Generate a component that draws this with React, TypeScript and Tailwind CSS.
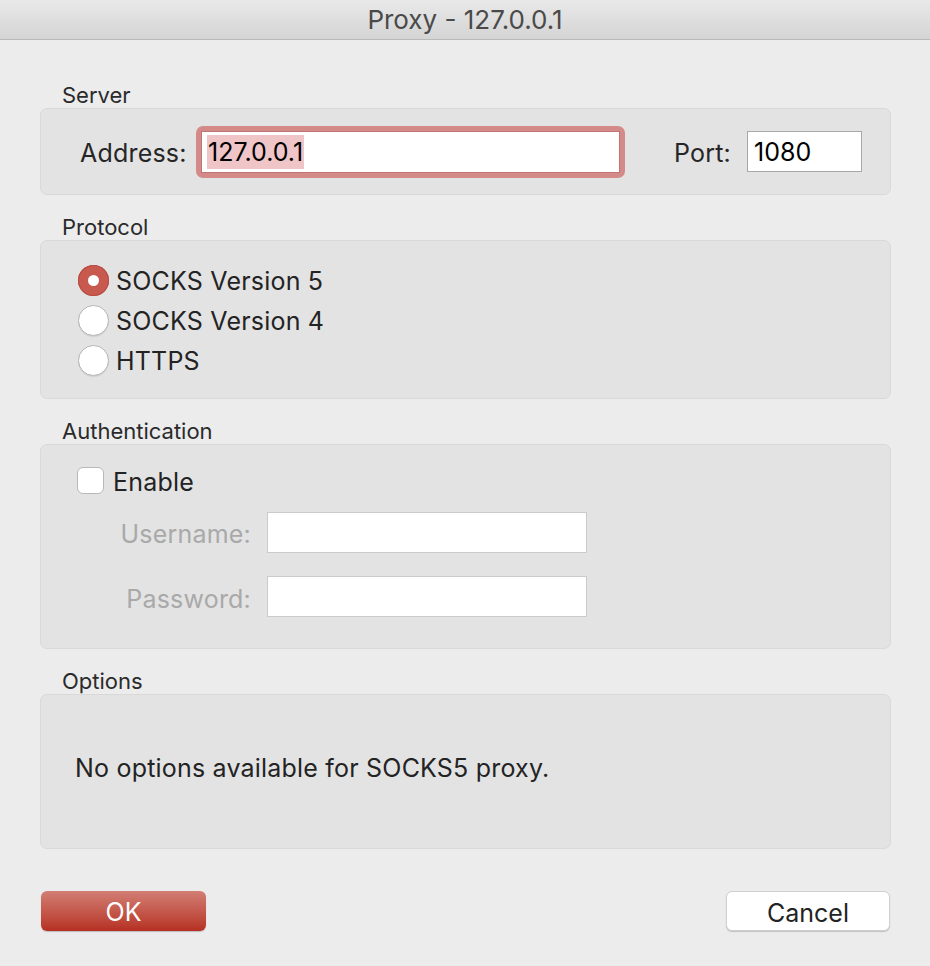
import React from 'react';

const font = { fontFamily: 'Inter, "Liberation Sans", Arial, sans-serif' };

const SectionLabel: React.FC<{ children: React.ReactNode }> = ({ children }) => (
  <div className="h-[26px] pl-[22px] flex items-center text-[22px] leading-none text-[#2a2a2a]">{children}</div>
);

const Radio: React.FC<{ checked?: boolean; label: string }> = ({ checked, label }) => (
  <div className="h-[40px] flex items-center">
    {checked ? (
      <span className="w-[31px] h-[31px] rounded-full bg-[#c8594e] flex items-center justify-center shadow-[inset_0_0_0_1px_#b84a40]">
        <span className="w-[11px] h-[11px] rounded-full bg-white" />
      </span>
    ) : (
      <span className="w-[31px] h-[31px] rounded-full bg-white border border-[#b5b5b5] shadow-[0_1px_1px_rgba(0,0,0,0.08)]" />
    )}
    <span className="ml-[7px] pt-[4px] text-[25px] tracking-[0.2px] text-[#232323]">{label}</span>
  </div>
);

export default function App() {
  return (
    <div className="w-[930px] h-[966px] bg-[#ececec] overflow-hidden" style={font}>
      {/* Title bar */}
      <div className="h-[40px] bg-gradient-to-b from-[#e9e9e9] to-[#d4d4d4] border-b border-[#b9b9b9] flex items-center justify-center">
        <span className="text-[26px] text-[#4a4a4a]">Proxy - 127.0.0.1</span>
      </div>

      <div className="px-[40px] pt-[42px] pr-[39px]">
        {/* Server */}
        <SectionLabel>Server</SectionLabel>
        <div className="h-[87px] rounded-[7px] bg-[#e3e3e3] border border-[#d9d9d9] flex items-center pl-[39px]">
          <span className="pt-[4px] text-[25px] tracking-[0.2px] text-[#262626] w-[116px] whitespace-nowrap">Address:</span>
          <div className="rounded-[7px] bg-[#d48a88] p-[5px]">
            <div className="w-[419px] h-[42px] bg-white border border-[#c17573] flex items-center pl-[5px]">
              <span className="bg-[#efc5c7] text-[25px] text-black leading-[34px] px-[1px]">127.0.0.1</span>
            </div>
          </div>
          <span className="ml-[49px] pt-[4px] text-[25px] tracking-[0.2px] text-[#262626] w-[73px]">Port:</span>
          <div className="w-[115px] h-[41px] bg-white border border-[#a8a8a8] flex items-center pl-[6px] pt-[2px] text-[25px] text-black">
            1080
          </div>
        </div>

        {/* Protocol */}
        <div className="mt-[19px]">
          <SectionLabel>Protocol</SectionLabel>
          <div className="h-[159px] rounded-[7px] bg-[#e3e3e3] border border-[#d9d9d9] pt-[19px] pl-[37px]">
            <Radio checked label="SOCKS Version 5" />
            <Radio label="SOCKS Version 4" />
            <Radio label="HTTPS" />
          </div>
        </div>

        {/* Authentication */}
        <div className="mt-[19px]">
          <SectionLabel>Authentication</SectionLabel>
          <div className="h-[205px] rounded-[7px] bg-[#e3e3e3] border border-[#d9d9d9] pt-[22px] pl-[36px]">
            <div className="h-[27px] flex items-center">
              <span className="w-[27px] h-[27px] rounded-[6px] bg-white border border-[#b8b8b8]" />
              <span className="ml-[9px] pt-[4px] text-[25px] tracking-[0.2px] text-[#232323]">Enable</span>
            </div>
            <div className="mt-[17px] flex items-center">
              <span className="w-[174px] pt-[5px] text-right text-[25px] tracking-[0.2px] text-[#a9a9a9]">Username:</span>
              <div className="ml-[16px] w-[320px] h-[41px] bg-white border border-[#cbcbcb]" />
            </div>
            <div className="mt-[22px] flex items-center">
              <span className="w-[174px] pt-[5px] text-right text-[25px] tracking-[0.2px] text-[#a9a9a9]">Password:</span>
              <div className="ml-[16px] w-[320px] h-[41px] bg-white border border-[#cbcbcb]" />
            </div>
          </div>
        </div>

        {/* Options */}
        <div className="mt-[19px]">
          <SectionLabel>Options</SectionLabel>
          <div className="h-[155px] rounded-[7px] bg-[#e3e3e3] border border-[#d9d9d9] flex items-center pl-[34px] pb-[6px]">
            <span className="text-[25px] tracking-[0.2px] text-[#232323]">No options available for SOCKS5 proxy.</span>
          </div>
        </div>

        {/* Buttons */}
        <div className="mt-[42px] flex justify-between pl-[1px] pr-[1px]">
          <button className="w-[165px] h-[40px] pt-[3px] rounded-[6px] bg-gradient-to-b from-[#d27d74] to-[#b52f22] shadow-[0_1px_1px_rgba(0,0,0,0.2)] text-white text-[25px]">
            OK
          </button>
          <button className="w-[164px] h-[40px] pt-[3px] rounded-[6px] bg-white border border-[#cfcfcf] shadow-[0_1px_1px_rgba(0,0,0,0.18)] text-[#232323] text-[25px]">
            Cancel
          </button>
        </div>
      </div>
    </div>
  );
}
